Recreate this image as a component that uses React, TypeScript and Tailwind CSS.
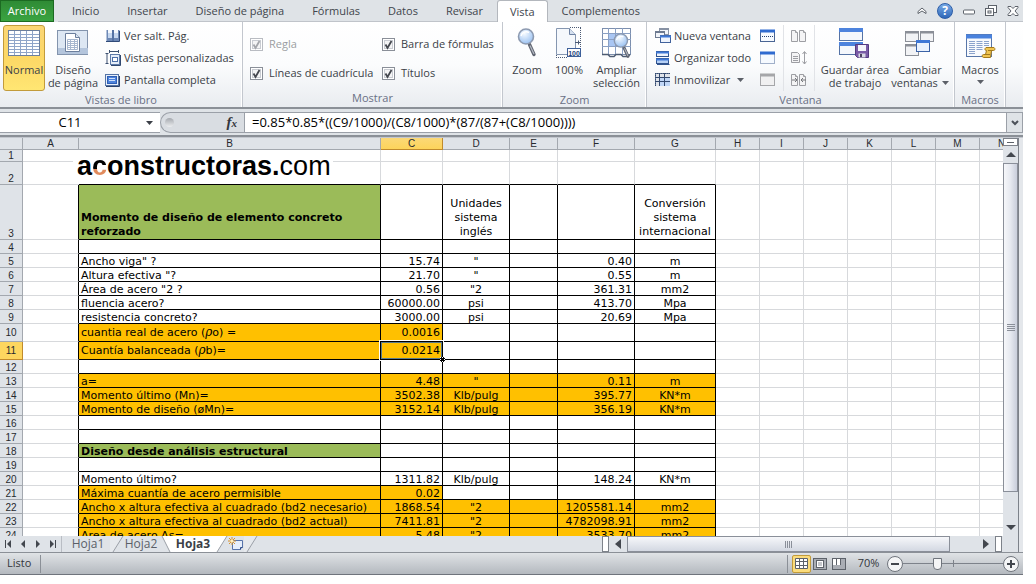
import * as React from "react";
import clsx from "clsx";

const tabs = [
  "Inicio",
  "Insertar",
  "Diseño de página",
  "Fórmulas",
  "Datos",
  "Revisar",
  "Vista",
  "Complementos",
];

const columns = [
  { name: "A", width: "w-[56px]" },
  { name: "B", width: "w-[302px]" },
  { name: "C", width: "w-[62px]" },
  { name: "D", width: "w-[67px]" },
  { name: "E", width: "w-[48px]" },
  { name: "F", width: "w-[77px]" },
  { name: "G", width: "w-[81px]" },
  { name: "H", width: "w-[44px]" },
  { name: "I", width: "w-[44px]" },
  { name: "J", width: "w-[44px]" },
  { name: "K", width: "w-[44px]" },
  { name: "L", width: "w-[44px]" },
  { name: "M", width: "w-[44px]" },
  { name: "N", width: "w-[44px]" },
];

type Row = {
  n: number;
  height?: string;
  middle?: boolean;
  // cells B to G
  cells?: React.ReactNode[];
  // how many cells, counted from B, are orange
  orange?: number;
  title?: boolean;
};

const Rho = () => (
  <i className="font-['DejaVu_Serif',serif] text-[12px]">ρ</i>
);

const rows: Row[] = [
  { n: 1, height: "h-[12px]" },
  { n: 2, height: "h-[23px]" },
  {
    n: 3,
    height: "h-[55px]",
    title: true,
    cells: [
      "Momento de diseño de elemento concreto reforzado",
      "",
      "Unidades sistema inglés",
      "",
      "",
      "Conversión sistema internacional",
    ],
  },
  { n: 4 },
  { n: 5, cells: ['Ancho viga" ?', "15.74", '"', "", "0.40", "m"] },
  { n: 6, cells: ['Altura efectiva "?', "21.70", '"', "", "0.55", "m"] },
  { n: 7, cells: ['Área de acero "2 ?', "0.56", '"2', "", "361.31", "mm2"] },
  { n: 8, cells: ["fluencia acero?", "60000.00", "psi", "", "413.70", "Mpa"] },
  {
    n: 9,
    cells: ["resistencia concreto?", "3000.00", "psi", "", "20.69", "Mpa"],
  },
  {
    n: 10,
    height: "h-[18px]",
    middle: true,
    orange: 2,
    cells: [
      <>
        cuantia real de acero (<Rho />
        o) =
      </>,
      "0.0016",
    ],
  },
  {
    n: 11,
    height: "h-[18px]",
    middle: true,
    orange: 2,
    cells: [
      <>
        Cuantía balanceada (<Rho />
        b)=
      </>,
      "0.0214",
    ],
  },
  { n: 12 },
  { n: 13, orange: 6, cells: ["a=", "4.48", '"', "", "0.11", "m"] },
  {
    n: 14,
    orange: 6,
    cells: ["Momento último (Mn)=", "3502.38", "Klb/pulg", "", "395.77", "KN*m"],
  },
  {
    n: 15,
    orange: 6,
    cells: [
      "Momento de diseño (øMn)=",
      "3152.14",
      "Klb/pulg",
      "",
      "356.19",
      "KN*m",
    ],
  },
  { n: 16 },
  { n: 17 },
  { n: 18, title: true, cells: ["Diseño desde análisis estructural"] },
  { n: 19 },
  {
    n: 20,
    cells: ["Momento último?", "1311.82", "Klb/pulg", "", "148.24", "KN*m"],
  },
  { n: 21, orange: 2, cells: ["Máxima cuantía de acero permisible", "0.02"] },
  {
    n: 22,
    orange: 6,
    cells: [
      "Ancho x altura efectiva al cuadrado (bd2 necesario)",
      "1868.54",
      '"2',
      "",
      "1205581.14",
      "mm2",
    ],
  },
  {
    n: 23,
    orange: 6,
    cells: [
      "Ancho x altura efectiva al cuadrado (bd2 actual)",
      "7411.81",
      '"2',
      "",
      "4782098.91",
      "mm2",
    ],
  },
  {
    n: 24,
    orange: 6,
    cells: ["Area de acero As=", "5.48", '"2', "", "3533.70", "mm2"],
  },
];

/* ---------- icons ---------- */

const NormalIcon = () => (
  <svg width="32" height="28" viewBox="0 0 32 28">
    <rect x="0.5" y="1.5" width="31" height="25" fill="#fff" stroke="#6c7f9d" />
    <path
      d="M1 5.5h30M1 8.5h30M1 11.5h30M1 14.5h30M1 17.5h30M1 20.5h30M1 23.5h30M6.5 2v24M12.5 2v24M18.5 2v24M24.5 2v24"
      stroke="#8fa5c9"
    />
  </svg>
);

const PageLayoutIcon = () => (
  <svg width="32" height="28" viewBox="0 0 32 28">
    <rect x="0.5" y="1.5" width="30" height="24" fill="#dde7f3" stroke="#8394ad" />
    <path d="M1 19h30v6H1z" fill="#b4c5dc" />
    <path d="M8.500 4.500h10l4 4v14h-14z" fill="#fff" stroke="#6c7f9d" />
    <path d="M18.500 4.500v4h4" fill="#dce6f2" stroke="#6c7f9d" />
    <path
      d="M10.500 10.500h10v10h-10zM10 12.500h10M10 14.500h10M10 16.500h10M10 18.500h10M13.500 10v10M17.500 10v10"
      fill="none"
      stroke="#a7b7cf"
    />
  </svg>
);

const PageBreakIcon = () => (
  <svg width="16" height="16" viewBox="0 0 16 16">
    <rect x="1.500" y="2" width="13" height="11" fill="#6d88b5" />
    <path d="M3 2h4v8H3zM9 2h4v8H9z" fill="#f4f8fd" />
    <path d="M3 5h4v5H3zM9 5h4v5H9z" fill="#c7d8ef" />
    <path d="M1 13.500h13.500V3" fill="none" stroke="#2f4a78" />
    <path d="M8 2v11" stroke="#3c5c92" />
  </svg>
);

const CustomViewsIcon = () => (
  <svg width="16" height="16" viewBox="0 0 16 16">
    <path d="M0.500 3.500h3M0.500 13.500h3M2 3.500v10M4 1.500h10M4.500 0v3M13.500 0v3" stroke="#3c5170" />
    <rect x="5.500" y="4.500" width="9" height="10" fill="#e5edf8" stroke="#5d7aa8" />
    <rect x="7.500" y="7.500" width="5" height="4" fill="#fff" stroke="#4c6fa8" />
    <path d="M15.500 5v10.500H6" fill="none" stroke="#31486f" />
  </svg>
);

const FullScreenIcon = () => (
  <svg width="16" height="16" viewBox="0 0 16 16">
    <rect x="0.500" y="2.500" width="13" height="11" fill="#e9f0fa" stroke="#5574a6" />
    <rect x="2.500" y="4.500" width="9" height="7" fill="#4d83dd" stroke="#2f5fb4" />
    <path d="M4 6.500h6M4 8.500h6" stroke="#cfe0fb" />
    <path d="M1 14.500h13.500V4" fill="none" stroke="#2b416a" />
  </svg>
);

const Lens = ({ id }: { id: string }) => (
  <>
    <defs>
      <radialGradient id={id} cx="0.4" cy="0.3" r="0.8">
        <stop offset="0" stopColor="#f6fbff" />
        <stop offset="1" stopColor="#8fbaf0" />
      </radialGradient>
    </defs>
    <path d="M12.500 16.500l4.500 10" stroke="#5f6470" strokeWidth="3.400" strokeLinecap="round" />
    <path d="M13 17.500l4 8.500" stroke="#b5bac4" strokeWidth="1.200" />
    <circle cx="9" cy="8.500" r="7.500" fill={`url(#${id})`} stroke="#8d9ab0" strokeWidth="1.600" />
    <path d="M4 8c1-4 5-5 8-3.500" fill="none" stroke="#fff" strokeWidth="1.400" />
  </>
);

const ZoomIcon = () => (
  <svg width="20" height="30" viewBox="0 0 20 30">
    <Lens id="lens-zoom" />
  </svg>
);

const HundredIcon = () => (
  <svg width="28" height="32" viewBox="0 0 28 32">
    <path d="M1.500 1.500h13l6 6v20h-19z" fill="#f5f8fc" stroke="#8596b0" />
    <path d="M14.500 1.500v6h6" fill="#d5e0ef" stroke="#6e82a3" />
    <path
      d="M15 0.500h11M25.500 1v20M1 30.500h12M1.500 28v3"
      stroke="#4b5a74"
      strokeDasharray="1 1"
    />
    <path d="M20 15.500h5M23.500 13.500v4" stroke="#4b5a74" />
    <rect x="12.500" y="21.500" width="13" height="8" fill="#fff" stroke="#3d5f99" />
    <text x="19" y="28.500" textAnchor="middle" className="fill-[#24447d] font-['Liberation_Sans',sans-serif] text-[7px] font-bold">
      100
    </text>
  </svg>
);

const ZoomSelectionIcon = () => (
  <svg width="32" height="32" viewBox="0 0 32 32">
    <rect x="1.500" y="1.500" width="28" height="26" fill="#fff" stroke="#7c8fae" />
    <path d="M8 7h14v13H8z" fill="#a9c6f3" />
    <path
      d="M1 6.500h29M1 12.500h29M1 19.500h29M7.500 1v26M14.500 1v26M21.500 1v26"
      stroke="#8aa0c4"
    />
    <path d="M1 27.500h6l2 2h4l2-2h5l2 2h5l2-2" fill="none" stroke="#4d5b72" strokeWidth="1.500" />
    <g transform="translate(12 6) scale(0.88)">
      <Lens id="lens-selection" />
    </g>
  </svg>
);

const NewWindowIcon = () => (
  <svg width="16" height="16" viewBox="0 0 16 16">
    <rect x="4.500" y="0.500" width="9" height="6" fill="#f1f4f9" stroke="#8792a4" />
    <path d="M4 1.500h10" stroke="#8792a4" />
    <rect x="0.500" y="3.500" width="9" height="6" fill="#f1f4f9" stroke="#6d7a90" />
    <path d="M0 4.500h10" stroke="#6d7a90" />
    <rect x="5.500" y="7.500" width="10" height="7" fill="#eef4fd" stroke="#41629c" />
    <path d="M5 8.500h11" stroke="#3f78d6" strokeWidth="2" />
  </svg>
);

const ArrangeIcon = () => (
  <svg width="16" height="16" viewBox="0 0 16 16">
    <rect x="1.500" y="1.500" width="12" height="5" fill="#eef4fd" stroke="#31548f" />
    <rect x="1.500" y="8.500" width="12" height="5" fill="#b6d0f5" stroke="#31548f" />
    <path d="M1 2.500h13M1 9.500h13" stroke="#3f78d6" strokeWidth="2" />
    <path d="M2 14.500h12.500" stroke="#31548f" />
  </svg>
);

const FreezeIcon = () => (
  <svg width="16" height="16" viewBox="0 0 16 16">
    <rect x="0.500" y="1.500" width="14" height="12" fill="#fff" stroke="#5d6f8e" />
    <path d="M5 6h10v8H5z" fill="#c1d7f7" />
    <path d="M1 2h14v3H1zM1 2h3v12H1z" fill="#dfe3ea" />
    <path
      d="M0 5.500h15M0 9.500h15M4.500 1v13M9.500 1v13"
      stroke="#33496f"
    />
    <path d="M0 1.500h15M0.500 1v14" stroke="#33496f" strokeDasharray="1 1" />
  </svg>
);

const WindowIcon = ({ kind }: { kind: "split" | "hide" | "show" }) => {
  const off = kind === "show";
  return (
    <svg width="16" height="16" viewBox="0 0 16 16">
      <rect
        x="0.500"
        y="2.500"
        width="14"
        height="11"
        fill={off ? "#f0f0f1" : "#f6faff"}
        stroke={off ? "#a5a6a9" : "#4a6594"}
        strokeDasharray={kind === "hide" ? "1 1" : undefined}
      />
      <path d="M0 3h15" stroke={off ? "#a5a6a9" : "#2f6bd0"} strokeWidth="3" />
      {kind === "split" && (
        <path d="M2 8.500h12" stroke="#24406f" strokeDasharray="1 1" />
      )}
    </svg>
  );
};

const CompareIcon = ({ kind }: { kind: "side" | "sync" | "reset" }) => (
  <svg width="18" height="16" viewBox="0 0 18 16" fill="#f4f4f5" stroke="#9d9ea3">
    {kind === "sync" ? (
      <>
        <path d="M1.500 2.500h6l2 2v8h-8z" />
        <path d="M3 6.500h5M3 8.500h5M3 10.500h5M14.500 2v12M12.500 4l2-2.500 2 2.500M12.500 11.500l2 2.500 2-2.500" />
      </>
    ) : (
      <>
        <path d="M1.500 2.500h4l2 2v9h-6zM9.500 2.500h4l2 2v9h-6z" />
        <path d="M5.500 2.500v2h2M13.500 2.500v2h2" />
        {kind === "reset" && (
          <path d="M2 8h5M5 6l2 2-2 2M16 8h-5M13 6l-2 2 2 2" stroke="#74767b" />
        )}
      </>
    )}
  </svg>
);

const SaveWorkspaceIcon = () => (
  <svg width="32" height="32" viewBox="0 0 32 32">
    <rect x="0.500" y="1.500" width="23" height="12" fill="#f4f7fc" stroke="#5573a5" />
    <path d="M0 3h24" stroke="#4d83dd" strokeWidth="4" />
    <rect x="0.500" y="15.500" width="23" height="12" fill="#f4f7fc" stroke="#5573a5" />
    <path d="M0 17h24" stroke="#4d83dd" strokeWidth="4" />
    <path d="M16.500 17.500h13v13h-11l-2-2z" fill="#7a5ba6" stroke="#543a80" />
    <path d="M19 18h8v6h-8z" fill="#f5f5fa" />
    <path d="M19.500 26.500h7v4h-7z" fill="#d9d9e4" />
    <path d="M21 27h2v3h-2z" fill="#4c4360" />
  </svg>
);

const SwitchWindowsIcon = () => (
  <svg width="32" height="32" viewBox="0 0 32 32">
    <g fill="#f2f3f5" stroke="#8b8f97">
      <rect x="1.500" y="4.500" width="13" height="10" />
      <rect x="16.500" y="4.500" width="13" height="10" />
      <rect x="1.500" y="17.500" width="13" height="11" />
    </g>
    <path d="M1 5.500h14M16 5.500h14M1 18.500h14" stroke="#8b8f97" strokeWidth="2" />
    <rect x="12.500" y="13.500" width="13" height="11" fill="#eaf2fd" stroke="#3b62a6" />
    <path d="M12 14.500h14" stroke="#3f78d6" strokeWidth="3" />
  </svg>
);

const MacrosIcon = () => (
  <svg width="32" height="32" viewBox="0 0 32 32">
    <rect x="2.500" y="7.500" width="25" height="22" fill="#f8fafd" stroke="#5876a8" />
    <path d="M2 9.500h26" stroke="#4a82dd" strokeWidth="4" />
    <path
      d="M5 14.500h6M5 16.500h6M5 18.500h6M5 20.500h6M5 22.500h6M5 24.500h6M5 26.500h6M12.500 14.500h6M12.500 16.500h6M12.500 18.500h6M12.500 20.500h6M12.500 22.500h6M20 14.500h5M20 16.500h5M20 18.500h5"
      stroke="#8ba3cc"
    />
    <path
      d="M22 20.500h8c1.500 1 1 3-.5 3h-2l-1 7h-7c-2-.5-1.500-3 0-3h2l1-4c-2 0-2-2-.5-3z"
      fill="#f0c450"
      stroke="#a37a1c"
    />
    <path d="M21 27.500h5M24 23.500h4" stroke="#a37a1c" />
  </svg>
);

const Caret = ({ className }: { className?: string }) => (
  <svg width="7" height="4" viewBox="0 0 7 4" className={className}>
    <path d="M0 0h7L3.500 4z" fill="currentColor" />
  </svg>
);

/* ---------- ribbon ---------- */

function Group({
  label,
  className,
  children,
}: {
  label: string;
  className?: string;
  children: React.ReactNode;
}) {
  return (
    <section
      className={clsx(
        "flex flex-col border-r border-[#c3c7ce] pt-[3px] shadow-[inset_-1px_0_0_#fff]",
        className,
      )}
    >
      <div className="flex h-[66px] items-start">{children}</div>
      <h2 className="text-center leading-[18px] text-[#6a7085]">{label}</h2>
    </section>
  );
}

function LargeButton({
  icon,
  lines,
  className,
  active,
  caret,
}: {
  icon: React.ReactNode;
  lines: string[];
  className?: string;
  active?: boolean;
  caret?: boolean;
}) {
  return (
    <button
      className={clsx(
        "flex h-[66px] shrink-0 flex-col items-center rounded-[3px] border leading-[13px] whitespace-nowrap",
        active
          ? "border-[#c29b3b] bg-linear-to-b from-[#fbd675] via-[#fcd866] to-[#ffe673]"
          : "border-transparent",
        className,
      )}
    >
      <span className="mt-px mb-1 flex h-8 items-center">{icon}</span>
      {lines.map((line, i) => (
        <span key={line} className="flex items-center gap-1">
          {line}
          {caret && i > 0 && <Caret className="text-[#5c6068]" />}
        </span>
      ))}
      {caret && lines.length === 1 && <Caret className="mt-1 text-[#5c6068]" />}
    </button>
  );
}

function SmallButton({
  icon,
  label,
  caret,
}: {
  icon: React.ReactNode;
  label: string;
  caret?: boolean;
}) {
  return (
    <button className="flex h-[22px] items-center gap-[3px] whitespace-nowrap">
      {icon}
      {label}
      {caret && <Caret className="ml-1 text-[#5c6068]" />}
    </button>
  );
}

function Check({ label, disabled }: { label: string; disabled?: boolean }) {
  return (
    <label
      className={clsx(
        "flex h-[29px] items-center gap-[6px] whitespace-nowrap",
        disabled && "text-[#9b9da1]",
      )}
    >
      <span className="grid">
        <input
          type="checkbox"
          defaultChecked
          disabled={disabled}
          className="col-start-1 row-start-1 size-[13px] appearance-none border border-[#8a8f98] bg-[#f4f4f5] shadow-[inset_0_0_0_1px_#fff,inset_0_0_0_2px_#c9ccd2] disabled:border-[#b9bcc2]"
        />
        <svg
          width="13"
          height="13"
          viewBox="0 0 13 13"
          className="pointer-events-none col-start-1 row-start-1"
        >
          <path
            d="M3.500 6.500l2 3.500 4-7"
            fill="none"
            stroke={disabled ? "#a3a5aa" : "#45484f"}
            strokeWidth="1.800"
          />
        </svg>
      </span>
      {label}
    </label>
  );
}

const IconButton = ({
  label,
  children,
}: {
  label: string;
  children: React.ReactNode;
}) => (
  <button aria-label={label} className="flex h-[22px] items-center">
    {children}
  </button>
);

function Ribbon() {
  return (
    <div className="flex h-[87px] border-b-2 border-[#8b9097] bg-linear-to-b from-white via-[#fbfcfd] to-[#e9ecf0] text-[#3b3f47]">
      <Group label="Vistas de libro" className="w-[243px]">
        <LargeButton active icon={<NormalIcon />} lines={["Normal"]} className="ml-[3px] w-[42px]" />
        <LargeButton icon={<PageLayoutIcon />} lines={["Diseño", "de página"]} className="w-[56px]" />
        <div className="ml-[4px] flex flex-col">
          <SmallButton icon={<PageBreakIcon />} label="Ver salt. Pág." />
          <SmallButton icon={<CustomViewsIcon />} label="Vistas personalizadas" />
          <SmallButton icon={<FullScreenIcon />} label="Pantalla completa" />
        </div>
      </Group>
      <Group label="Mostrar" className="w-[260px]">
        <div className="grid grid-cols-[132px_auto] pt-[5px] pl-[7px]">
          <Check label="Regla" disabled />
          <Check label="Barra de fórmulas" />
          <Check label="Líneas de cuadrícula" />
          <Check label="Títulos" />
        </div>
      </Group>
      <Group label="Zoom" className="w-[144px]">
        <LargeButton icon={<ZoomIcon />} lines={["Zoom"]} className="ml-[3px] w-[42px]" />
        <LargeButton icon={<HundredIcon />} lines={["100%"]} className="w-[42px]" />
        <LargeButton icon={<ZoomSelectionIcon />} lines={["Ampliar", "selección"]} className="w-[53px]" />
      </Group>
      <Group label="Ventana" className="w-[308px]">
        <div className="flex w-[113px] flex-col pl-[8px]">
          <SmallButton icon={<NewWindowIcon />} label="Nueva ventana" />
          <SmallButton icon={<ArrangeIcon />} label="Organizar todo" />
          <SmallButton icon={<FreezeIcon />} label="Inmovilizar" caret />
        </div>
        <div className="flex flex-col border-r border-[#e1e3e7] pr-[7px]">
          <IconButton label="Dividir"><WindowIcon kind="split" /></IconButton>
          <IconButton label="Ocultar"><WindowIcon kind="hide" /></IconButton>
          <IconButton label="Mostrar"><WindowIcon kind="show" /></IconButton>
        </div>
        <div className="flex flex-col border-r border-[#e1e3e7] px-[6px]">
          <IconButton label="Ver en paralelo"><CompareIcon kind="side" /></IconButton>
          <IconButton label="Desplazamiento sincrónico"><CompareIcon kind="sync" /></IconButton>
          <IconButton label="Restablecer posición"><CompareIcon kind="reset" /></IconButton>
        </div>
        <LargeButton icon={<SaveWorkspaceIcon />} lines={["Guardar área", "de trabajo"]} className="ml-[3px] w-[74px]" />
        <LargeButton caret icon={<SwitchWindowsIcon />} lines={["Cambiar", "ventanas"]} className="w-[56px]" />
      </Group>
      <Group label="Macros" className="w-[51px]">
        <LargeButton caret icon={<MacrosIcon />} lines={["Macros"]} className="w-[50px]" />
      </Group>
    </div>
  );
}

function TabBar() {
  return (
    <header className="flex h-[22px] items-stretch bg-[#dfe3e7] text-[#41454c]">
      <button className="w-[54px] border border-[#1c6a22] bg-linear-to-b from-[#2f8b35] to-[#3aa441] text-white">
        Archivo
      </button>
      <nav className="flex pl-[4px]">
        {tabs.map((tab) => (
          <button
            key={tab}
            className={clsx(
              "pt-[2px] whitespace-nowrap",
              tab === "Vista"
                ? "rounded-t-[3px] border border-b-0 border-[#b3b7bd] bg-white px-[12px]"
                : "border-b border-[#c0c4ca] px-[14px]",
            )}
          >
            {tab}
          </button>
        ))}
      </nav>
      <div className="flex flex-1 items-center justify-end gap-[10px] border-b border-[#c0c4ca] pr-[4px]">
        <button aria-label="Minimizar la cinta de opciones">
          <svg width="10" height="8" viewBox="0 0 10 8">
            <path d="M1 4.500l4-3.500 4 3.500v2L5 4 1 6.500z" fill="#fff" stroke="#5d626a" />
          </svg>
        </button>
        <button
          aria-label="Ayuda"
          className="size-[16px] rounded-full border border-[#2d5ea8] bg-linear-to-b from-[#78aae6] to-[#2f67b8] text-[12px] leading-[14px] font-bold text-white"
        >
          ?
        </button>
        <button aria-label="Minimizar ventana">
          <svg width="12" height="12" viewBox="0 0 12 12">
            <rect x="0.500" y="5" width="11" height="4" rx="1" fill="#fff" stroke="#5d626a" />
          </svg>
        </button>
        <button aria-label="Restaurar ventana">
          <svg width="12" height="12" viewBox="0 0 12 12" fill="#fff" stroke="#5d626a">
            <rect x="3.500" y="0.500" width="8" height="7" />
            <rect x="0.500" y="3.500" width="8" height="7" />
            <rect x="3" y="6" width="3" height="2" />
          </svg>
        </button>
        <button aria-label="Cerrar ventana">
          <svg width="12" height="12" viewBox="0 0 12 12">
            <path
              d="M1 1.500h3l2 2 2-2h3v1L8 6l3 3.500v1H8l-2-2-2 2H1v-1L4 6 1 2.500z"
              fill="#fff"
              stroke="#5d626a"
            />
          </svg>
        </button>
      </div>
    </header>
  );
}

function FormulaBar() {
  return (
    <div className="flex h-[28px] border-b-2 border-[#8b9097] bg-[#dfe3e7] pt-[3px] pb-[2px]">
      <div className="flex w-[160px] items-center border-y border-[#9ba0a8] bg-white">
        <input
          aria-label="Cuadro de nombres"
          defaultValue="C11"
          className="w-[140px] min-w-0 bg-transparent text-center text-[13px] text-black outline-none"
        />
        <button aria-label="Abrir nombres" className="ml-[6px]">
          <Caret className="text-[#3b3f47]" />
        </button>
      </div>
      <div className="flex w-[84px] items-center justify-between rounded-l-full border border-r-0 border-[#9ba0a8] bg-[#d9dde2] pr-[7px] pl-[4px]">
        <span className="size-[9px] rounded-full bg-linear-to-b from-[#a5a9af] to-[#eceef0]" />
        <button
          aria-label="Insertar función"
          className="font-['Liberation_Serif',serif] text-[15px] leading-[16px] font-bold text-[#33363c] italic"
        >
          f<span className="text-[11px]">x</span>
        </button>
      </div>
      <input
        aria-label="Barra de fórmulas"
        defaultValue="=0.85*0.85*((C9/1000)/(C8/1000)*(87/(87+(C8/1000))))"
        className="min-w-0 flex-1 border border-[#9ba0a8] bg-white pl-[7px] text-[13px] text-black outline-none"
      />
      <button
        aria-label="Expandir barra de fórmulas"
        className="flex w-[16px] items-center justify-center border border-l-0 border-[#9ba0a8] bg-[#dfe3e7]"
      >
        <svg width="8" height="6" viewBox="0 0 8 6">
          <path d="M1 1l3 3 3-3" fill="none" stroke="#4d525a" strokeWidth="2" />
        </svg>
      </button>
    </div>
  );
}

/* ---------- sheet ---------- */

const Logo = () => (
  <div className="absolute top-0 left-[-6px] z-10 h-[34px] w-[260px] bg-white pl-[4px] text-left font-['Liberation_Sans',sans-serif] text-[27px] leading-[32px] font-bold whitespace-nowrap text-black">
    a
    <span className="bg-[linear-gradient(#000_60%,#e08a5c_60%)] bg-clip-text text-transparent">
      c
    </span>
    onstructoras.<span className="font-normal">com</span>
  </div>
);

const Selection = () => (
  <span className="pointer-events-none absolute -inset-[1px] z-10 border border-black shadow-[inset_0_0_0_1px_#5b7c8c,0_0_0_1px_#fff]">
    <span className="absolute -right-[3px] -bottom-[3px] size-[5px] border border-dotted border-white bg-black" />
  </span>
);

function Cell({ row, index }: { row: Row; index: number }) {
  // index 0 is column A, 1 to 6 are the framed columns B to G
  const value = row.cells?.[index - 1];
  const framed = index >= 1 && index <= 6;
  const selected = row.n === 11 && index === 2;
  const fill = framed && row.orange !== undefined && index <= row.orange;

  return (
    <td
      className={clsx(
        "relative border-r border-b px-[2px] py-0",
        row.middle ? "align-middle" : "align-bottom",
        row.n >= 3 && index <= 6 ? "border-r-black" : "border-r-[#d7d9dc]",
        row.n >= 2 && framed ? "border-b-black" : "border-b-[#d7d9dc]",
        index === 1 && "text-left",
        (index === 2 || index === 5) && "text-right",
        (index === 3 || index === 6) && "text-center",
        fill && "bg-[#ffc000]",
        row.title && index === 1 && "bg-[#9bbb59] font-bold",
        row.n === 3 ? "leading-[14px]" : "leading-[11px] whitespace-nowrap",
      )}
    >
      {row.n === 1 && index === 1 && <Logo />}
      {selected && <Selection />}
      {value}
    </td>
  );
}

function Sheet() {
  return (
    <div className="min-w-0 flex-1 overflow-hidden bg-white">
      <table className="w-[1024px] table-fixed border-separate border-spacing-0 font-['DejaVu_Sans',sans-serif] text-[11px] text-black">
        <thead>
          <tr className="h-[12px] font-['Liberation_Sans',sans-serif] text-[10px] leading-[11px] text-[#26292e]">
            <th className="w-[23px] border-r border-b border-[#a3a8af] bg-[#dfe3e8] p-0" aria-label="Seleccionar todo" />
            {columns.map(({ name, width }) => (
              <th
                key={name}
                scope="col"
                className={clsx(
                  "border-r border-b p-0 text-center font-normal",
                  width,
                  name === "C"
                    ? "border-[#c08a2c] bg-linear-to-b from-[#fbd877] to-[#fdd45a]"
                    : "border-[#a3a8af] bg-[#dfe3e8]",
                )}
              >
                {name}
              </th>
            ))}
          </tr>
        </thead>
        <tbody>
          {rows.map((row) => (
            <tr key={row.n} className={row.height ?? "h-[14px]"}>
              <th
                scope="row"
                className={clsx(
                  "border-r border-b p-0 text-center font-['Liberation_Sans',sans-serif] text-[10px] leading-[11px] font-normal text-[#26292e]",
                  row.middle ? "align-middle" : "align-bottom",
                  row.n === 11
                    ? "border-[#c08a2c] bg-[#fdd65f]"
                    : "border-[#a3a8af] bg-[#dfe3e8]",
                )}
              >
                {row.n}
              </th>
              {columns.map((column, index) => (
                <Cell key={column.name} row={row} index={index} />
              ))}
            </tr>
          ))}
        </tbody>
      </table>
    </div>
  );
}

const Arrow = ({ d, w = 10, h = 10 }: { d: string; w?: number; h?: number }) => (
  <svg width={w} height={h} viewBox={`0 0 ${w} ${h}`}>
    <path d={d} fill="#43474e" />
  </svg>
);

function VerticalScroll() {
  return (
    <div className="flex w-[20px] flex-col border-r-4 border-[#e4e7eb] bg-[#dfe3e8]">
      <div className="flex flex-1 flex-col items-stretch border-r border-[#7d828a]">
        <div className="flex h-[8px] items-center justify-center border border-[#7d828a] bg-white">
          <span className="h-px w-[7px] bg-[#5d626a]" />
        </div>
        <button aria-label="Desplazar arriba" className="flex h-[17px] items-center justify-center">
          <Arrow d="M0 5L5 0l5 5z" h={5} />
        </button>
        <div className="flex h-[329px] flex-col items-center justify-center gap-px border border-[#8a8f99] bg-linear-to-r from-[#f6f7fa] via-[#e6e9f0] to-[#c9cedb]">
          <span className="h-px w-[8px] bg-[#8a8f99]" />
          <span className="h-px w-[8px] bg-[#8a8f99]" />
          <span className="h-px w-[8px] bg-[#8a8f99]" />
          <span className="h-px w-[8px] bg-[#8a8f99]" />
        </div>
        <div className="flex-1" />
        <button aria-label="Desplazar abajo" className="flex h-[18px] items-center justify-center">
          <Arrow d="M0 0h10L5 5z" h={5} />
        </button>
      </div>
    </div>
  );
}

const Slash = ({ className, flip }: { className?: string; flip?: boolean }) => (
  <svg width="14" height="16" viewBox="0 0 14 16" className={className}>
    <path
      d={flip ? "M4 0h10v16h-2z" : "M0 0h13L3 16H0z"}
      className="fill-current"
    />
    <path
      d={flip ? "M4 0l8 16" : "M13 0L3 16"}
      fill="none"
      stroke="#9a9fa7"
    />
  </svg>
);

function SheetTabs() {
  return (
    <div className="flex h-[17px] border-b border-[#8b9097] bg-[#dfe3e8] text-[12px] leading-[16px] text-[#5a5f68]">
      <div className="flex w-[62px] items-center justify-between border-r border-[#b9bdc4] px-[4px]">
        <button aria-label="Primera hoja"><Arrow w={8} h={8} d="M1 0h1v8H1zM7 0v8L3 4z" /></button>
        <button aria-label="Hoja anterior"><Arrow w={8} h={8} d="M6 0v8L2 4z" /></button>
        <button aria-label="Hoja siguiente"><Arrow w={8} h={8} d="M2 0v8l4-4z" /></button>
        <button aria-label="Última hoja"><Arrow w={8} h={8} d="M6 0h1v8H6zM1 0v8l4-4z" /></button>
      </div>
      <button className="w-[48px] pl-[4px]">Hoja1</button>
      <Slash className="text-[#e6e9ed]" />
      <button className="w-[34px]">Hoja2</button>
      <Slash flip className="text-white" />
      <button className="w-[42px] bg-white font-bold text-[#3b3f47]">Hoja3</button>
      <Slash className="text-white" />
      <button aria-label="Insertar hoja de cálculo">
        <svg width="16" height="14" viewBox="0 0 16 14">
          <path d="M4.500 3.500h10v7l-2 2h-8z" fill="#e6eefb" stroke="#5673ab" />
          <path d="M14.500 10.500h-2v2" fill="#fff" stroke="#2d4a86" />
          <path d="M4 0v8M0 4h8M1 1l6 6M7 1L1 7" stroke="#d8922c" />
          <circle cx="4" cy="4" r="1.500" fill="#fff0c0" />
        </svg>
      </button>
      <Slash className="text-[#e6e9ed]" />
      <div className="flex-1" />
      <div className="flex w-[421px] shrink-0 items-stretch">
        <span className="w-[7px] border border-[#7d828a] bg-white" />
        <button aria-label="Desplazar a la izquierda" className="flex w-[18px] items-center justify-center">
          <Arrow w={6} h={10} d="M6 0v10L0 5z" />
        </button>
        <div className="flex w-[323px] items-center justify-center gap-px border border-[#8a8f99] bg-linear-to-b from-[#f6f7fa] to-[#d3d8e2]">
          <span className="h-[7px] w-px bg-[#8a8f99]" />
          <span className="h-[7px] w-px bg-[#8a8f99]" />
          <span className="h-[7px] w-px bg-[#8a8f99]" />
          <span className="h-[7px] w-px bg-[#8a8f99]" />
        </div>
        <div className="flex-1" />
        <button aria-label="Desplazar a la derecha" className="flex w-[17px] items-center justify-center">
          <Arrow w={6} h={10} d="M0 0v10l6-5z" />
        </button>
        <span className="ml-px w-[7px] border border-[#7d828a] bg-white" />
        <span className="w-[17px] border-r border-[#7d828a]" />
        <span className="w-[4px] bg-[#e4e7eb]" />
      </div>
    </div>
  );
}

function StatusBar() {
  return (
    <footer className="flex h-[22px] items-center border-b border-[#6f747c] bg-linear-to-b from-[#e0e3e6] to-[#b4b9bf] pr-[4px] text-[#33363c]">
      <span className="flex h-[18px] w-[41px] items-center border-r border-[#8b9097] pl-[7px]">
        Listo
      </span>
      <div className="flex-1" />
      <div className="flex items-center border-l border-[#8b9097] pl-[4px]">
        <button
          aria-label="Vista normal"
          aria-pressed="true"
          className="flex h-[18px] w-[19px] items-center justify-center rounded-[2px] border border-[#c29b3b] bg-[#fbdc7c]"
        >
          <svg width="13" height="11" viewBox="0 0 13 11">
            <path
              d="M0.500 0.500h12v10h-12zM0 3.500h13M0 7.500h13M4.500 0v11M8.500 0v11"
              fill="#fff"
              stroke="#5d626a"
            />
          </svg>
        </button>
        <button aria-label="Diseño de página" className="ml-[2px]">
          <svg width="14" height="12" viewBox="0 0 14 12">
            <rect x="0.500" y="0.500" width="13" height="11" fill="#a9adb4" stroke="#5d626a" />
            <rect x="3.500" y="2.500" width="7" height="7" fill="#fff" stroke="#5d626a" />
            <path d="M5 5h4M5 7h4" stroke="#8a8f99" />
          </svg>
        </button>
        <button aria-label="Vista previa de salto de página" className="ml-[5px]">
          <svg width="14" height="12" viewBox="0 0 14 12">
            <rect x="0.500" y="0.500" width="13" height="11" fill="#a9adb4" stroke="#5d626a" />
            <path d="M1 1h3v6H1zM5 1h4v6H5z" fill="#fff" />
            <path d="M4.500 1v6M8.500 1v6" stroke="#5d626a" />
          </svg>
        </button>
        <button className="mr-[2px] ml-[6px] w-[33px] text-center">70%</button>
        <button
          aria-label="Alejar"
          className="flex size-[16px] items-center justify-center rounded-full border border-[#6f747c] bg-[#f4f5f6]"
        >
          <span className="h-[2px] w-[8px] bg-[#43474e]" />
        </button>
        <input
          type="range"
          aria-label="Zoom"
          min={10}
          max={190}
          defaultValue={70}
          className="h-[12px] w-[100px] appearance-none bg-[linear-gradient(#7d828a,#7d828a),linear-gradient(#7d828a,#7d828a)] bg-[length:100%_1px,1px_7px] bg-center bg-no-repeat [&::-webkit-slider-thumb]:h-[12px] [&::-webkit-slider-thumb]:w-[9px] [&::-webkit-slider-thumb]:appearance-none [&::-webkit-slider-thumb]:rounded-b-[4px] [&::-webkit-slider-thumb]:border [&::-webkit-slider-thumb]:border-[#6f747c] [&::-webkit-slider-thumb]:bg-[#f4f5f6]"
        />
        <button
          aria-label="Acercar"
          className="flex size-[16px] items-center justify-center rounded-full border border-[#6f747c] bg-[#f4f5f6]"
        >
          <svg width="8" height="8" viewBox="0 0 8 8">
            <path d="M4 0v8M0 4h8" stroke="#43474e" strokeWidth="2" />
          </svg>
        </button>
      </div>
    </footer>
  );
}

export default function App() {
  return (
    <div className="flex h-screen flex-col bg-white pr-[13px] pb-[9px] font-['Open_Sans',sans-serif] text-[11px]">
      <TabBar />
      <Ribbon />
      <FormulaBar />
      <main className="flex min-h-0 flex-1 border-t border-[#c3c7ce]">
        <Sheet />
        <VerticalScroll />
      </main>
      <SheetTabs />
      <StatusBar />
    </div>
  );
}
